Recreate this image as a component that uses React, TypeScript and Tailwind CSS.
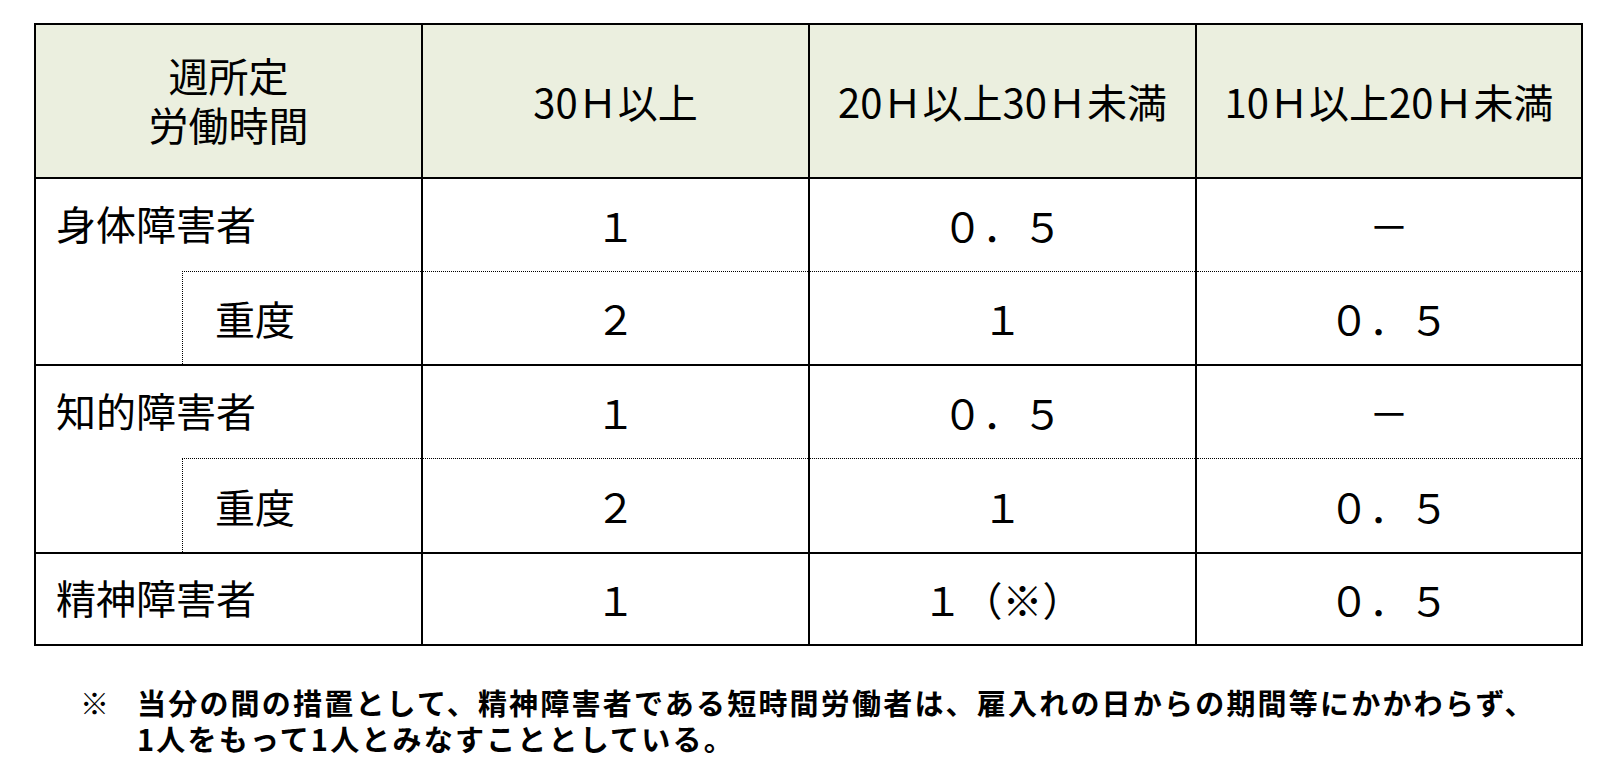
const font = "font-['Noto_Sans_CJK_JP',sans-serif]";

type Group = {
  label: string;
  main: string[];
  sub?: string[];
};

const groups: Group[] = [
  { label: "身体障害者", main: ["１", "０．５", "－"], sub: ["２", "１", "０．５"] },
  { label: "知的障害者", main: ["１", "０．５", "－"], sub: ["２", "１", "０．５"] },
  { label: "精神障害者", main: ["１", "１（※）", "０．５"] },
];

const colW = ["w-[387px]", "w-[387px]", "w-[386px]"];

function ValueCells({ values, dotted }: { values: string[]; dotted?: boolean }) {
  return (
    <>
      {values.map((v, i) => (
        <div key={i} className={`${colW[i]} h-full border-l-2 border-black`}>
          <div
            className={`flex h-full items-center justify-center ${
              dotted ? "border-t border-dotted border-black" : ""
            }`}
          >
            {v}
          </div>
        </div>
      ))}
    </>
  );
}

export default function App() {
  return (
    <div className={`min-h-screen bg-white text-black ${font}`}>
      <div className="pl-[34px] pt-[23px]">
        <div className="w-[1549px] border-2 border-black text-[40px] leading-none">
          {/* header */}
          <div className="flex h-[154px] border-b-2 border-black bg-[#ebefdf]">
            <div className="flex w-[385px] flex-col items-center justify-center gap-[9px] pb-[3px]">
              <span>週所定</span>
              <span>労働時間</span>
            </div>
            {["30Ｈ以上", "20Ｈ以上30Ｈ未満", "10Ｈ以上20Ｈ未満"].map((h, i) => (
              <div
                key={h}
                className={`${colW[i]} flex items-center justify-center border-l-2 border-black`}
              >
                {h}
              </div>
            ))}
          </div>

          {groups.map((g, gi) => (
            <div key={g.label}>
              <div
                className={`flex ${
                  gi === 0 ? "h-[92px]" : gi === 1 ? "h-[94px] border-t-2 border-black" : "h-[92px] border-t-2 border-black"
                }`}
              >
                <div className="flex w-[385px] items-center pb-[4px] pl-[20px]">{g.label}</div>
                <ValueCells values={g.main} />
              </div>
              {g.sub ? (
                <div className={`flex ${gi === 0 ? "h-[93px]" : "h-[94px]"}`}>
                  <div className="flex w-[385px]">
                    <div className="w-[146px]" />
                    <div className="flex flex-1 items-center border-l border-t border-dotted border-black pl-[32px]">
                      重度
                    </div>
                  </div>
                  <ValueCells values={g.sub} dotted />
                </div>
              ) : null}
            </div>
          ))}
        </div>

        <div className="mt-[38px] flex pl-[46px] text-[29px] font-bold leading-[36px] tracking-[2.2px]">
          <span className="w-[57px] shrink-0 tracking-normal">※</span>
          <p>
            当分の間の措置として、精神障害者である短時間労働者は、雇入れの日からの期間等にかかわらず、
            <br />
            1人をもって1人とみなすこととしている。
          </p>
        </div>
      </div>
    </div>
  );
}
